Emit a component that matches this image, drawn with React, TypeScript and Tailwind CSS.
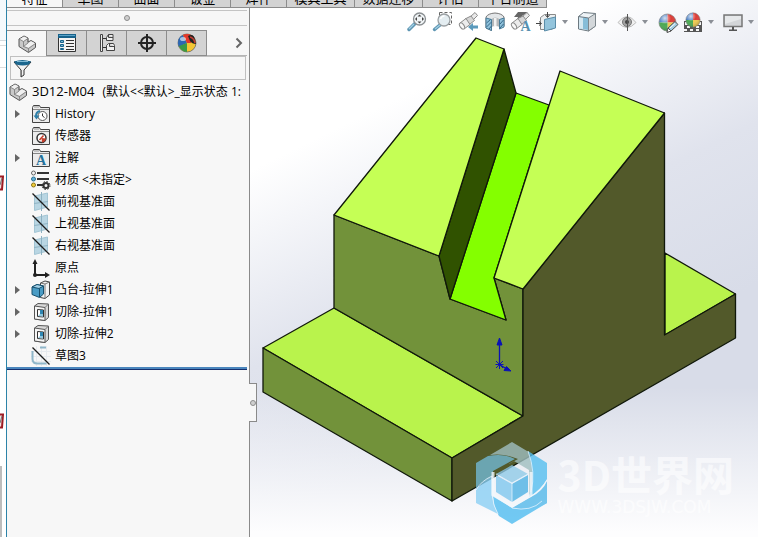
import React from 'react';

const ribbonTabs = [
  { label: '特征', width: 'w-14' },
  { label: '草图', width: 'w-14' },
  { label: '曲面', width: 'w-14' },
  { label: '钣金', width: 'w-14' },
  { label: '焊件', width: 'w-14' },
  { label: '模具工具', width: 'w-[68px]' },
  { label: '数据迁移', width: 'w-[68px]' },
  { label: '评估', width: 'w-14' },
  { label: '平台制造', width: 'w-[68px]' },
];

/* ---------- panel tab icons ---------- */

function PartIcon() {
  return (
    <svg width="20" height="20" viewBox="0 0 20 20" strokeLinejoin="round">
      <path d="M2 5 7 2 11 4V8L14 6.500 18.500 9V13.500L11.500 18.500 2 12.500Z" fill="#c9c9c9" stroke="#555" />
      <path d="M2.500 5.200 7 2.500 10.500 4.200 6.500 7.200Z" fill="#f0f0f0" />
      <path d="M7 12 14 7.200 18 9.200 11.500 13.800Z" fill="#f0f0f0" />
      <path d="M6.500 7.500V12.500L11.500 14.500V18.500M6.500 12.500 11 9V4.500L6.500 7.500 2 5M11.500 14.500 18.500 9.500" fill="none" stroke="#777" strokeWidth="0.800" />
    </svg>
  );
}

function PropertyIcon() {
  return (
    <svg width="20" height="20" viewBox="0 0 20 20">
      <path d="M1.500 1.500h17v17h-17z" fill="#f4f4f4" stroke="#333" />
      <path d="M1 1h18v4H1z" fill="#17628b" />
      <path d="M2 2h16v1H2z" fill="#5aa3c8" />
      <path d="M3.500 7.500h3v2h-3zM3.500 11.500h3v2h-3zM3.500 15.500h3v1h-3z" fill="#74b4d3" stroke="#17628b" />
      <path d="M9 7.500h8M9 10.500h8M9 13.500h8M9 16.500h8" stroke="#333" />
    </svg>
  );
}

function ConfigIcon() {
  return (
    <svg width="20" height="20" viewBox="0 0 20 20" fill="none" stroke="#444">
      <path d="M3.500 1.500h2v17h-2z" fill="#eee" />
      <path d="M6 5.500h4M6 14.500h4" stroke="#333" />
      <path d="M9.500 4.500 11.500 1.500h4.500v6H9.500zM11.500 1.500V4.500h4.500" fill="#f0f0f0" />
      <path d="M9.500 12.500 11.500 10.500h5l1 2v5H9.500zM12.500 10.500v3h5" fill="#f0f0f0" />
    </svg>
  );
}

function TargetIcon() {
  return (
    <svg width="20" height="20" viewBox="0 0 20 20" fill="none" stroke="#222" strokeWidth="2">
      <circle cx="10" cy="10" r="6" />
      <path d="M10 1v18M1 10h18" />
    </svg>
  );
}

function Ball({ size, id }: { size: number; id: string }) {
  return (
    <svg width={size} height={size} viewBox="0 0 20 20">
      <defs>
        <radialGradient id={id} cx="0.35" cy="0.25" r="0.8">
          <stop offset="0" stopColor="#fff" stopOpacity="0.75" />
          <stop offset="0.45" stopColor="#fff" stopOpacity="0" />
          <stop offset="1" stopColor="#000" stopOpacity="0.25" />
        </radialGradient>
      </defs>
      <path d="M10 10 1 10A9 9 0 0 1 10 1Z" fill="#4a7fc4" />
      <path d="M10 10 10 1A9 9 0 0 1 19 10Z" fill="#dc3b36" />
      <path d="M10 10 19 10A9 9 0 0 1 10 19Z" fill="#f0cb50" />
      <path d="M10 10 10 19A9 9 0 0 1 1 10Z" fill="#4aa852" />
      <circle cx="10" cy="10" r="9" fill={`url(#${id})`} stroke="#7a7a7a" strokeWidth="0.6" />
    </svg>
  );
}

function DisplayIcon() {
  return (
    <svg width="20" height="20" viewBox="0 0 20 20">
      <circle cx="10" cy="10" r="9" fill="#f3c532" stroke="#444" strokeWidth="0.600" />
      <path d="M10 10 1 11A9 9 0 0 1 6 2Z" fill="#2d67b4" />
      <path d="M10 10 6 2A9 9 0 0 1 14 2L14 10Z" fill="#e2362c" />
      <path d="M10 10 2 14A9 9 0 0 1 1 10Z" fill="#2d67b4" />
      <path d="M10 10 10 19A9 9 0 0 1 2 13Z" fill="#3a9a45" />
      <path d="M11 3q6-3 7 4l1 4q-4 0-6-3Z" fill="#222" />
      <path d="M13 4q4 1 5 6" stroke="#c23b30" strokeWidth="1.500" fill="none" />
      <ellipse cx="6" cy="6" rx="3" ry="2" fill="#fff" opacity="0.6" />
    </svg>
  );
}

function FilterIcon() {
  return (
    <svg width="19" height="19" viewBox="0 0 19 19">
      <path d="M1 3 8 11v7l3-2v-5l7-8z" fill="#f2f2f2" stroke="#333" />
      <path d="M1 2.500q8.500-3 17 0l-2 3q-6 2-13 0z" fill="#1b668e" />
      <path d="M4 2.500h11" stroke="#7fb9d4" />
      <path d="M8.500 11v6" stroke="#777" />
    </svg>
  );
}

/* ---------- tree icons ---------- */

function FolderBase({ children }: { children?: React.ReactNode }) {
  return (
    <svg width="20" height="20" viewBox="0 0 20 20">
      <path d="M1.500 18.500v-15l1-2h6l1 2h9v15z" fill="#ececec" stroke="#444" />
      <path d="M2 5.500h16" stroke="#888" />
      <path d="M3 3h5" stroke="#999" />
      {children}
    </svg>
  );
}

function HistoryIcon() {
  return (
    <FolderBase>
      <circle cx="11.500" cy="12" r="4.500" fill="#fff" stroke="#555" />
      <path d="M11.500 9.500V12l2 1.500" fill="none" stroke="#333" />
      <path d="M5 12q0-4 4-5" fill="none" stroke="#2e7fa8" strokeWidth="2" />
      <path d="M2.500 11.500h6l-3 4z" fill="#2e7fa8" />
    </FolderBase>
  );
}

function SensorIcon() {
  return (
    <FolderBase>
      <circle cx="10.500" cy="12" r="4.500" fill="#fff" stroke="#333" strokeWidth="1.500" />
      <path d="M10.500 12 15 12.500a4.500 4.500 0 0 1-4 4z" fill="#c43d2b" />
      <path d="m8.500 14 4-4.500" stroke="#c43d2b" strokeWidth="1.500" />
    </FolderBase>
  );
}

function AnnotationIcon() {
  return (
    <FolderBase>
      <text x="10" y="17" textAnchor="middle" fill="#24719b" className="font-['Liberation_Serif',serif] text-[14px] font-bold">
        A
      </text>
    </FolderBase>
  );
}

function MaterialIcon() {
  return (
    <svg width="20" height="20" viewBox="0 0 20 20">
      <path d="M6 3h12M6 9h12M6 15h7" stroke="#333" strokeWidth="2" />
      <circle cx="2.500" cy="3" r="2" fill="#f3f3f3" stroke="#666" />
      <circle cx="2.500" cy="9" r="2" fill="#5fb0d6" stroke="#2b6f94" />
      <circle cx="2.500" cy="15" r="2" fill="#f1cd3a" stroke="#8c7619" />
      <circle cx="15" cy="15.500" r="2.500" fill="none" stroke="#333" strokeWidth="2" />
      <circle cx="15" cy="15.500" r="4" fill="none" stroke="#333" strokeDasharray="1.600 1.540" />
    </svg>
  );
}

function PlaneIcon() {
  return (
    <svg width="20" height="20" viewBox="0 0 20 20">
      <path d="M3.500 4 16.500 1v14L3.500 18.500z" fill="#b9d6e3" stroke="#a3c5d4" />
      <path d="M10.500 0v19M3 11.500l14-2" stroke="#8eb2c2" />
      <path d="M1.500 1.500 18.500 18.500" stroke="#1c1c1c" strokeWidth="1.300" />
    </svg>
  );
}

function OriginIcon() {
  return (
    <svg width="20" height="20" viewBox="0 0 20 20">
      <path d="M4 4v13h11" fill="none" stroke="#222" strokeWidth="2" />
      <path d="M1.500 6 4 1l2.500 5zM14 14l5 3-5 3z" fill="#222" />
      <circle cx="4" cy="17" r="2" fill="#222" />
    </svg>
  );
}

function BossIcon() {
  return (
    <svg width="20" height="20" viewBox="0 0 20 20" strokeLinejoin="round">
      <path d="M9.500 3 14 1l4.500 1v13L14 18.500l-4.500-1z" fill="#f2f2f2" stroke="#444" />
      <path d="M14 4V18.500M9.500 3l4.500 1 4.500-2" fill="none" stroke="#777" />
      <path d="M1 7 6 4.500l6.500 1.500v8L8.500 17.500 1 14.500z" fill="#4a9cc5" stroke="#17506e" />
      <path d="M1 7 8 8.500l4.500-2.500L6 4.500z" fill="#a5d2e8" stroke="#17506e" />
      <path d="M8.500 8.500V17" stroke="#17506e" />
    </svg>
  );
}

function CutIcon() {
  return (
    <svg width="20" height="20" viewBox="0 0 20 20" strokeLinejoin="round">
      <path d="M3.500 4 7 1.500 17.500 2v13.500L14 18.500 3.500 17z" fill="#d9d9d9" stroke="#555" />
      <path d="M3.500 4 14 5.500V18.500L3.500 17z" fill="#f5f5f5" stroke="#555" />
      <path d="M14 5.500 17.500 2" stroke="#777" />
      <path d="M6.500 7.500 12.500 8v7L6.500 14.500z" fill="#fff" stroke="#333" />
      <path d="M9 8h3v5H9z" fill="#2f86b2" />
      <path d="M7 14 9 12h3v2.500z" fill="#8fc6de" />
    </svg>
  );
}

function SketchIcon() {
  return (
    <svg width="20" height="20" viewBox="0 0 20 20" fill="none">
      <path d="M5.500 0v20M10.500 0v20M15.500 0v20M0 5.500h20M0 10.500h20M0 15.500h20" stroke="#e6eaee" />
      <path d="M9 1.500H15M1.500 5v8q0 4.500 5 4.500h9" stroke="#8fb6c9" strokeWidth="2" />
      <path d="M1.500 1.500 18.500 18.500" stroke="#1c1c1c" strokeWidth="1.300" />
    </svg>
  );
}

const treeItems = [
  { label: 'History', Icon: HistoryIcon, expandable: true },
  { label: '传感器', Icon: SensorIcon, expandable: false },
  { label: '注解', Icon: AnnotationIcon, expandable: true },
  { label: '材质 <未指定>', Icon: MaterialIcon, expandable: false },
  { label: '前视基准面', Icon: PlaneIcon, expandable: false },
  { label: '上视基准面', Icon: PlaneIcon, expandable: false },
  { label: '右视基准面', Icon: PlaneIcon, expandable: false },
  { label: '原点', Icon: OriginIcon, expandable: false },
  { label: '凸台-拉伸1', Icon: BossIcon, expandable: true },
  { label: '切除-拉伸1', Icon: CutIcon, expandable: true },
  { label: '切除-拉伸2', Icon: CutIcon, expandable: true },
  { label: '草图3', Icon: SketchIcon, expandable: false },
];

/* ---------- view toolbar icons ---------- */

function ZoomFitIcon() {
  return (
    <svg width="22" height="22" viewBox="0 0 22 22">
      <path d="m3 18.500 6-6" stroke="#5e96b3" strokeWidth="3.500" strokeLinecap="round" />
      <path d="m3 18 5-5" stroke="#a3cfe3" strokeWidth="1.200" />
      <circle cx="13.500" cy="8" r="6" fill="#f1f5f7" stroke="#8a8f92" strokeWidth="1.300" />
      <path d="m13.500 3.500 2 2h-4zM13.500 12.500l2-2h-4zM9 8l2-2v4zM18 8l-2-2v4z" fill="#444" />
    </svg>
  );
}

function ZoomAreaIcon() {
  return (
    <svg width="22" height="22" viewBox="0 0 22 22">
      <path d="M7.500 1.500h12v12h-12z" fill="none" stroke="#666" strokeDasharray="3 2" />
      <path d="m2.500 18.500 6-5" stroke="#5e96b3" strokeWidth="3.500" strokeLinecap="round" />
      <path d="m3 18 5-4" stroke="#a3cfe3" strokeWidth="1.200" />
      <circle cx="12" cy="9" r="6" fill="#e4edf1" stroke="#9a9fa2" strokeWidth="1.300" />
      <path d="M8.500 8q1-3 4-3" fill="none" stroke="#fff" strokeWidth="1.500" />
    </svg>
  );
}

function Telescope() {
  return (
    <g stroke="#8c8c8c" strokeLinejoin="round">
      <path d="m12 6 5-4.500 2.500 3-4.500 4.500z" fill="#e9e9e9" />
      <path d="m7 8 6-3 3.500 4.500-5 4z" fill="#d6d6d6" />
      <path d="m2 12 6-4.500 4 6L6 18z" fill="#ececec" />
      <ellipse cx="4" cy="15" rx="2" ry="3.500" transform="rotate(-35 4 15)" fill="#f8f8f8" />
    </g>
  );
}

function PreviousViewIcon() {
  return (
    <svg width="22" height="22" viewBox="0 0 22 22">
      <Telescope />
      <path d="m10 16 5-4v2.500h5v3h-5V20z" fill="#5b9abc" />
    </svg>
  );
}

function SectionIcon() {
  return (
    <svg width="22" height="22" viewBox="0 0 22 22" strokeLinejoin="round">
      <path d="M2 6q2-3.500 9-4 7 .5 9 4v9l-4.500 2V9h-8v10.500L2 17z" fill="#e3e6e8" stroke="#777" />
      <path d="M7.500 8q3.500-3 8 0v8q-4-2-8 0z" fill="#b5b8ba" />
      <path d="M10 7h2.500v8H10z" fill="#f2f2f2" />
      <path d="M2 7 7.500 8.500v11L2 17zM15.500 8.500 20 7v9l-4.500 2z" fill="#8fc1da" stroke="#4a7d99" />
      <path d="m2.500 12 4-3.500M2.500 16l5-5M5 18l2.500-3M16 13l3.500-4M16 17l3.500-4" stroke="#37698a" />
    </svg>
  );
}

function DynamicViewIcon() {
  return (
    <svg width="22" height="22" viewBox="0 0 22 22">
      <path d="M8 1h10l-6 4h3l-8 4 1-3H4z" fill="#666" />
      <Telescope />
      <text x="15.500" y="20" textAnchor="middle" fill="#5690b0" className="font-['Liberation_Serif',serif] text-[14px] font-bold">
        A
      </text>
    </svg>
  );
}

function OrientationIcon() {
  return (
    <svg width="22" height="22" viewBox="0 0 22 22" strokeLinejoin="round">
      <path d="m4.500 6.500 4-3h11v12l-4 3h-11z" fill="#eceff0" stroke="#8a8a8a" />
      <path d="M8.500 8.500 19.500 6v11l-11 3z" fill="#93c4dc" stroke="#5a8ca8" />
      <path d="M11.500 1v5M9.500 4l2 2.500 2-2.500M0 12.500h5M3 10.500l2.500 2-2.500 2" fill="none" stroke="#444" />
    </svg>
  );
}

function DisplayStyleIcon() {
  return (
    <svg width="22" height="22" viewBox="0 0 22 22" strokeLinejoin="round">
      <path d="m2.500 5.500 5-4 12 1V15l-7 5-10-2z" fill="#eef3f6" stroke="#6c7880" />
      <path d="m12.500 7 7-4.500V15l-7 5z" fill="#d3d7da" stroke="#7d868c" />
      <path d="M3 6 12 7v12L3 17.500z" fill="#86bdd8" />
      <path d="M3 6l4 .5v11.500l-4-.5z" fill="#d5e8f1" />
      <path d="m2.500 5.500 10 1.500" fill="none" stroke="#6c7880" />
    </svg>
  );
}

function EyeIcon() {
  return (
    <svg width="22" height="22" viewBox="0 0 22 22">
      <path d="M2 11.500q9-12 18 0-9 10-18 0z" fill="#f0f0f0" stroke="#bdbdbd" />
      <circle cx="11" cy="11" r="4.500" fill="#a2a2a2" stroke="#777" />
      <circle cx="11" cy="11" r="2" fill="#444" />
      <path d="M11.500 3v17" stroke="#555" />
    </svg>
  );
}

function AppearanceIcon() {
  return (
    <div className="relative">
      <Ball size={19} id="ball-appearance" />
      <svg className="absolute -right-0.5 -bottom-0.5" width="14" height="14" viewBox="0 0 14 14">
        <path d="m2 12 1-4 7-6.500 3 3L6 11z" fill="#9fcce2" stroke="#555" />
        <path d="m3 8 3 3-4 1.500z" fill="#fff" stroke="#555" />
        <path d="m5 8 5-4.500" stroke="#fff" />
      </svg>
    </div>
  );
}

function SceneIcon() {
  return (
    <div className="relative">
      <svg width="20" height="20" viewBox="0 0 20 20">
        <path d="M1 9h18v11H1z" fill="#555" />
        <path d="M2 10h3v3H2zM15 10h3v3h-3zM1 17h3v2H1zM7 17h3v2H7zM13 17h3v2h-3zM4 14h3v2H4zM13 14h3v2h-3z" fill="#f4f4f4" />
      </svg>
      <div className="absolute top-0 left-0.5">
        <Ball size={16} id="ball-scene" />
      </div>
    </div>
  );
}

function MonitorIcon() {
  return (
    <svg width="22" height="22" viewBox="0 0 22 22">
      <path d="M2 4h18v11.500H2z" fill="#d3d5d8" stroke="#777" strokeWidth="1.500" />
      <path d="M10 16h2v3h-2zM7 18.500h8V20H7z" fill="#555" />
      <path d="M3 5h16v3L3 13z" fill="#e6e8ea" />
    </svg>
  );
}

const viewTools = [
  { label: '整屏显示全图', Icon: ZoomFitIcon, menu: false },
  { label: '局部放大', Icon: ZoomAreaIcon, menu: false },
  { label: '上一视图', Icon: PreviousViewIcon, menu: false },
  { label: '剖面视图', Icon: SectionIcon, menu: false },
  { label: '动态注解视图', Icon: DynamicViewIcon, menu: false },
  { label: '视图定向', Icon: OrientationIcon, menu: true },
  { label: '显示样式', Icon: DisplayStyleIcon, menu: true },
  { label: '隐藏项目', Icon: EyeIcon, menu: true },
  { label: '编辑外观', Icon: AppearanceIcon, menu: false },
  { label: '应用布景', Icon: SceneIcon, menu: true },
  { label: '视图设置', Icon: MonitorIcon, menu: true },
];

const panelTabs = [
  { label: '特征树', Icon: PartIcon },
  { label: '属性', Icon: PropertyIcon },
  { label: '配置', Icon: ConfigIcon },
  { label: '尺寸', Icon: TargetIcon },
  { label: '显示', Icon: DisplayIcon },
];

function RedMark() {
  return (
    <svg className="block" width="4" height="18" viewBox="0 0 4 18">
      <path d="M0 2.500h3L2 15.500H0" fill="#f3dede" stroke="#9d1c24" strokeWidth="2" />
      <path d="m0 11 2-7" stroke="#777" />
    </svg>
  );
}

function BackgroundStrip() {
  return (
    <div className="w-1.5 shrink-0 flex flex-col overflow-hidden bg-white">
      <div className="h-[41px] shrink-0 bg-[#f4f9fc] border-b border-[#d5dade]" />
      <div className="mt-1 h-[23px] shrink-0 border-y border-[#dcdcdc]" />
      <div className="mt-[106px]">
        <RedMark />
      </div>
      <div className="mt-[220px]">
        <RedMark />
      </div>
      <div className="mt-9 w-0.5 flex-1 bg-[#bdbdbd]" />
    </div>
  );
}

function FeaturePanel() {
  return (
    <aside className="relative w-[243px] shrink-0 flex flex-col bg-[#f7f7f7] border-r border-[#8a8a8a] pr-0.5">
      <div className="mt-0.5 h-4 shrink-0 flex items-center justify-center border-y border-[#c4c4c4]">
        <span className="size-1.5 rounded-full border border-[#8d8d8d] bg-[#cfcfcf]" />
      </div>

      <div className="mt-1 h-[26px] shrink-0 flex">
        {panelTabs.map(({ label, Icon }, index) => (
          <button
            key={label}
            title={label}
            className={
              index === 0
                ? 'w-10 flex items-center justify-center border-t border-r border-[#8c8c8c]'
                : 'w-10 flex items-center justify-center bg-[#d3d3d3] border-t border-r border-b border-[#8c8c8c]'
            }
          >
            <Icon />
          </button>
        ))}
        <button title="更多" className="flex-1 flex items-center justify-end pr-1 border-b border-[#b5b5b5]">
          <svg width="8" height="12" viewBox="0 0 8 12" fill="none" stroke="#666" strokeWidth="2">
            <path d="m1.500 1.500 4.500 4.500-4.500 4.500" />
          </svg>
        </button>
      </div>

      <label className="mx-[3px] mr-px h-6 shrink-0 flex items-center gap-1 pl-0.5 border border-[#c0c0c0]">
        <FilterIcon />
        <input type="text" aria-label="筛选" className="flex-1 min-w-0 bg-transparent outline-none" />
      </label>

      <div className="h-[23px] shrink-0 flex items-center gap-1 pl-px whitespace-pre">
        <span className="w-5 shrink-0">
          <PartIcon />
        </span>
        <span className="text-[13px]">3D12-M04</span>
        <span className="pl-1">{'(默认<<默认>_显示状态 1:'}</span>
      </div>

      <ul>
        {treeItems.map(({ label, Icon, expandable }) => (
          <li key={label} className="h-[22px] flex items-center pl-1.5">
            <span className="w-[18px] flex">
              {expandable && (
                <button title="展开" className="w-3 flex pl-0.5">
                  <svg width="5" height="8" viewBox="0 0 5 8">
                    <path d="M0 0 5 4 0 8z" fill="#666" />
                  </svg>
                </button>
              )}
            </span>
            <Icon />
            <span className="pl-1 whitespace-pre">{label}</span>
          </li>
        ))}
      </ul>
      <div className="h-[3px] shrink-0 bg-[#4a86bd] border-b border-[#16306e]" />

      <button
        title="收起"
        className="absolute left-full top-[375px] h-[39px] w-2 flex items-center justify-center bg-[#f7f7f7] border border-l-0 border-[#8a8a8a]"
      >
        <span className="size-1.5 shrink-0 rounded-full border border-[#8d8d8d] bg-[#cfcfcf]" />
      </button>
    </aside>
  );
}

function Model() {
  return (
    <svg className="block w-full h-full" viewBox="250 36 508 501">
      <g stroke="#10180a" strokeWidth="1.300" strokeLinejoin="round">
        {/* base */}
        <path d="M665 253 735.500 294 665 335Z" fill="#b9f34c" />
        <path d="M263 348 334 308 523 416 452 458Z" fill="#b9f34c" />
        <path d="M263 348 452 458 452 501 263 392Z" fill="#72923a" />
        {/* body */}
        <path d="M334 215 439 256 450 299 506 320 494 278 523 289 523 416 334 308Z" fill="#72923a" />
        <path d="M523 289 664.500 113 664.500 335 735.500 294 735.500 338 452 501 452 458 523 416Z" fill="#52592a" />
        {/* groove */}
        <path d="M516 93 549 105 494 278 506 320 450 299Z" fill="#84ff00" />
        <path d="M504 49 516 93 450 299 439 256Z" fill="#305200" />
        {/* slopes */}
        <path d="M476 38 504 49 439 256 334 215Z" fill="#c5ff55" />
        <path d="M560 71 664.500 113 523 289 494 278Z" fill="#c5ff55" />
      </g>
      <g stroke="#0b12b5" fill="#0b12b5">
        <path d="M499.500 364V343M500 365 507 369" strokeWidth="1.300" />
        <path d="M499.500 338 502 345H497ZM511 371 504 370.500 506.500 366.500Z" />
        <path d="M496 361 503 368M496 368 503 361M495.500 364.500H503.500M499.500 361V369" />
      </g>
    </svg>
  );
}

function Watermark() {
  return (
    <div className="absolute right-6 bottom-[13px] flex items-center gap-2.5 text-white/55">
      <svg width="72" height="82" viewBox="0 0 72 82">
        <g opacity="0.8">
          <path d="M14 13 36 0 56 12Q60 28 56 50L53 55V28L38 19 29 24 42 17Q28 11 14 13Z" fill="#a0bfc0" />
          <path d="M0 21 12 14Q28 11 39 17L17 29V36Q5 39 0 48Z" fill="#72b8d3" />
          <path d="M0 48Q5 39 16 34V52Q17 64 22 72L0 61Z" fill="#8bd0f5" />
          <path d="M17 54 36 66Q52 70 66 59L71 61 36 82 23 74Q17 64 17 54Z" fill="#50bdf1" />
          <path d="M52 9 71 21V37Q65 48 53 55 60 32 52 9Z" fill="#55bff0" />
          <path d="M71 39V61Q55 70 36 66L55 55Q67 49 71 39Z" fill="#54b9ea" />
          <path d="m20 32 16-9 16 9-16 9z" fill="#91cbe8" />
          <path d="m20 33 16 9v18L20 50z" fill="#80c8ef" />
          <path d="m52 33-16 9v18l16-10z" fill="#4fb3e5" />
        </g>
        <g fill="none" stroke="#eaf6ff" strokeOpacity="0.75">
          <path d="M0 48Q5 39 16 34M16 34V52Q17 64 22 72M36 66Q55 70 66 59M71 38Q65 48 54 55M52 9Q60 30 55 50" />
          <path d="m20 32 16 9 16-9M36 41v19" />
        </g>
        <path d="M17 30V53L36 64 55 53V30" fill="none" stroke="#f2f7fb" strokeOpacity="0.8" strokeWidth="3" />
      </svg>
      <div className="flex flex-col">
        <span className="font-['Noto_Sans_CJK_SC',sans-serif] text-[41px] leading-[48px] font-bold">3D世界网</span>
        <span className="font-['DejaVu_Sans',sans-serif] text-[17px] leading-5">WWW.3DSJW.COM</span>
      </div>
    </div>
  );
}

function Viewport() {
  return (
    <main className="relative flex-1 min-w-0 flex flex-col">
      <div className="h-7 shrink-0 flex items-center justify-end gap-1 overflow-hidden">
        {viewTools.map(({ label, Icon, menu }) => (
          <button key={label} title={label} className="shrink-0 flex items-center">
            <span className="w-[22px] h-[22px] flex items-center justify-center">
              <Icon />
            </span>
            {menu && (
              <span className="w-3.5 flex justify-center">
                <svg width="6" height="4" viewBox="0 0 6 4">
                  <path d="M0 0h6L3 4z" fill="#8b8f96" />
                </svg>
              </span>
            )}
          </button>
        ))}
      </div>
      <div className="flex-1 min-h-0">
        <Model />
      </div>
      <Watermark />
    </main>
  );
}

export default function App() {
  return (
    <div className="h-screen flex overflow-hidden bg-white text-black text-xs font-['Open_Sans','Noto_Sans_CJK_SC',sans-serif]">
      <BackgroundStrip />
      <div className="flex-1 min-w-0 flex flex-col border-l border-[#2c83a8] bg-[linear-gradient(to_bottom,transparent_72%,#fdfdfe_99%),linear-gradient(154deg,#ffffff_32%,#e0e3ed_54%,#d8dce8_72%)]">
        <nav className="h-2 shrink-0 flex overflow-hidden">
          {ribbonTabs.map(({ label, width }, index) => (
            <button
              key={label}
              className={`${width} h-2 shrink-0 flex items-end justify-center border-r border-b border-[#8c8c8c] text-[13px] leading-[18px] whitespace-nowrap ${
                index === 0 ? 'bg-[#f7f7f7]' : 'bg-[#d3d3d3]'
              }`}
            >
              {label}
            </button>
          ))}
        </nav>
        <div className="flex-1 min-h-0 flex">
          <FeaturePanel />
          <Viewport />
        </div>
      </div>
    </div>
  );
}
